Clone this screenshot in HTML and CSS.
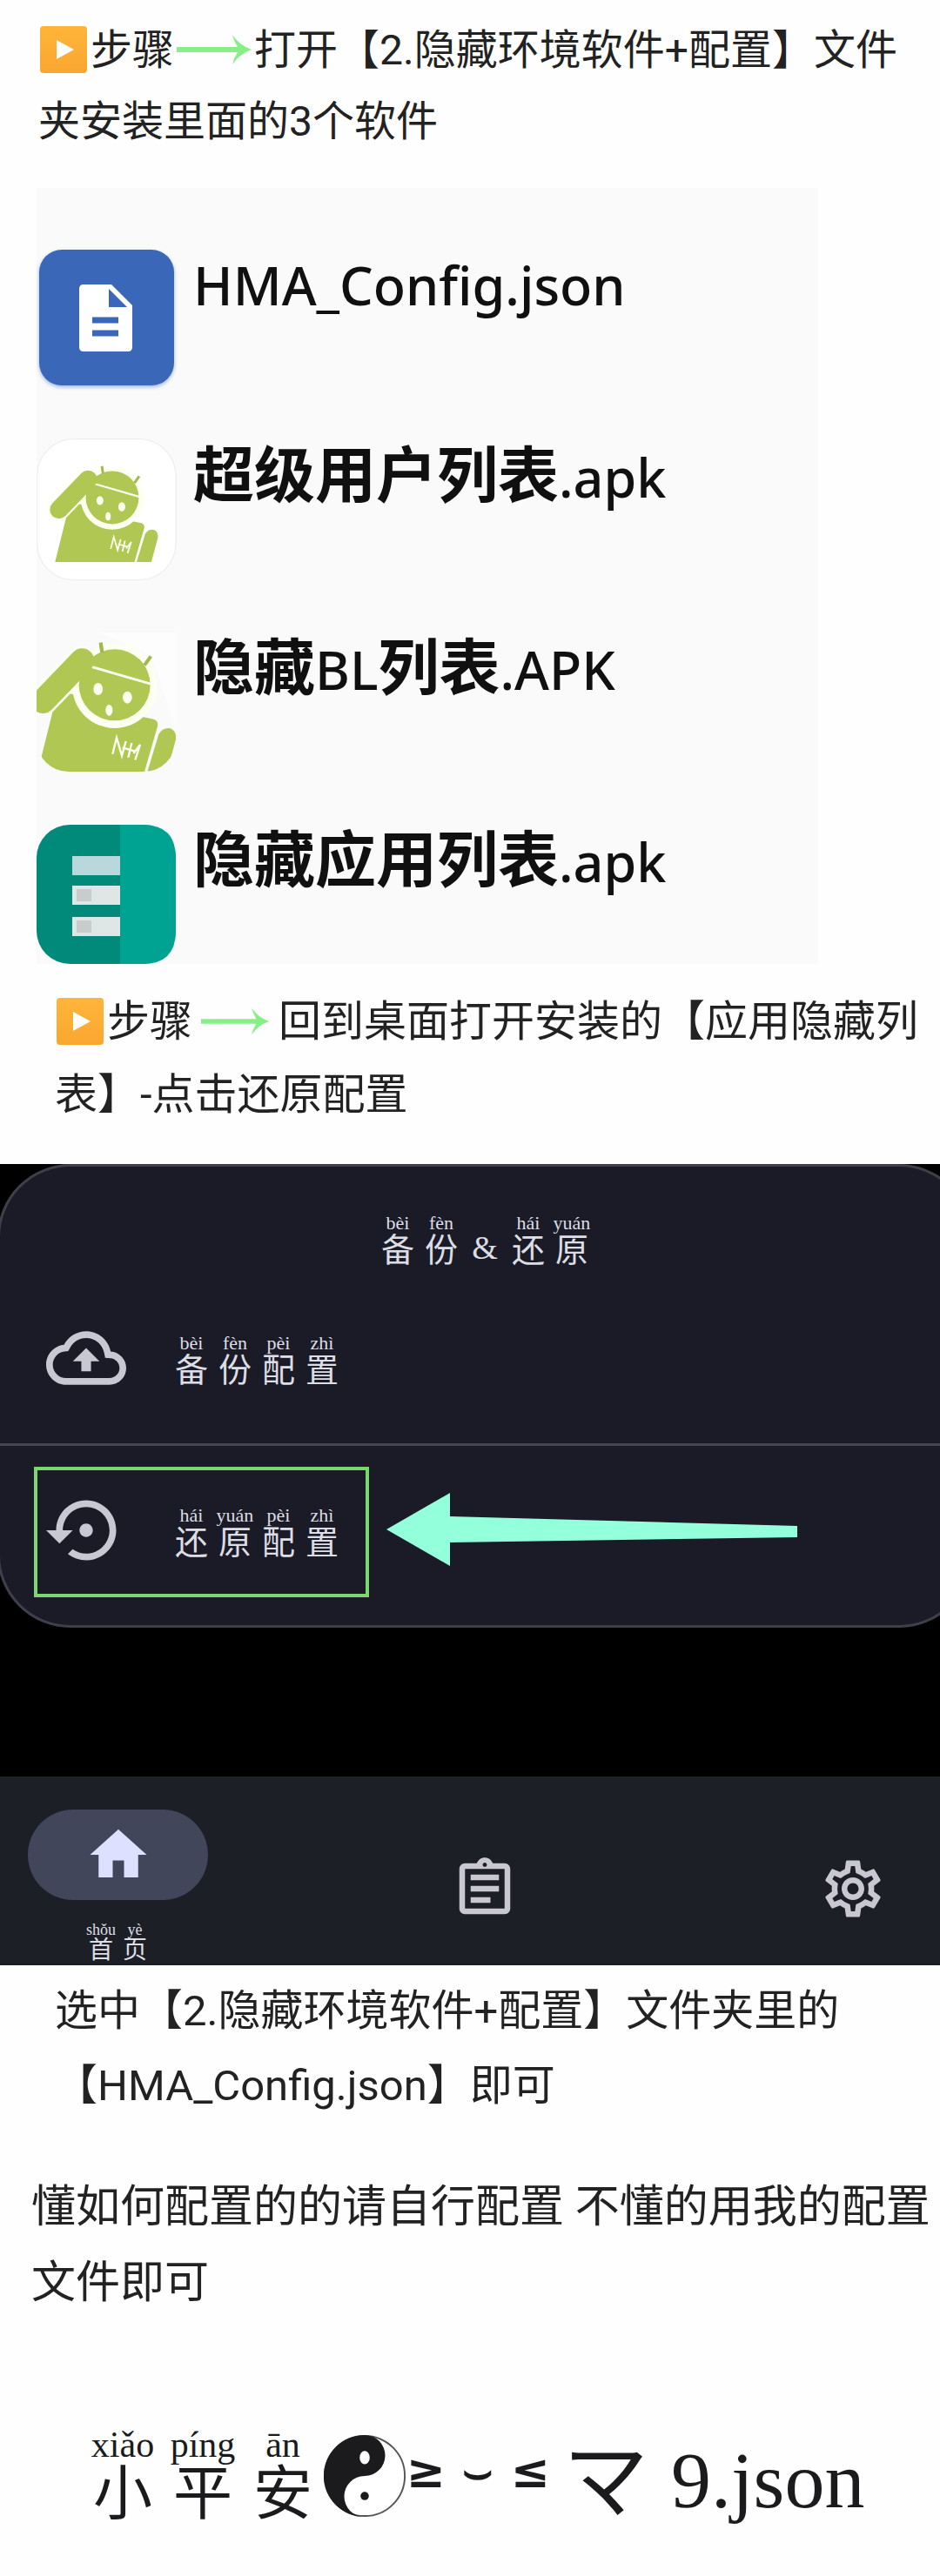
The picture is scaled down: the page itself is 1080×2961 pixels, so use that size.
FILE: index.html
```html
<!DOCTYPE html>
<html lang="zh-CN">
<head>
<meta charset="utf-8">
<meta name="viewport" content="width=device-width, initial-scale=1">
<title>隐藏应用列表 配置步骤</title>
<link rel="stylesheet" href="styles.css">
</head>
<body>
<svg width="0" height="0" class="defs" aria-hidden="true">
  <defs>
    <linearGradient id="orange" x1="0" y1="0" x2="0" y2="1">
      <stop offset="0" stop-color="#ffb53a"/><stop offset="1" stop-color="#f9a62f"/>
    </linearGradient>
    <symbol id="play" viewBox="0 0 54 54">
      <rect width="54" height="54" rx="4" fill="url(#orange)"/>
      <path d="M19 16 39 27 19 38Z" fill="#fff"/>
    </symbol>
    <symbol id="arrow" viewBox="0 0 86 36">
      <path d="M0 15H70Q66 9 64 1Q72 13 86 18Q72 23 64 35Q66 27 70 21H0Z" fill="#86f086"/>
    </symbol>
    <g id="robot">
      <path d="M150 921 405 1003 440 1010Q457 1016 453 1035L408 1191H40L95 970Q108 920 150 921Z" fill="#b0c853"/>
      <circle cx="305" cy="895" r="146" fill="#fdfff0"/>
      <path d="M193 808 58 948" stroke="#fdfff0" stroke-width="100" stroke-linecap="round"/>
      <circle cx="305" cy="892" r="123" fill="#b0c853"/>
      <path d="M257 746 262 780M430 793 408 824" stroke="#a2b950" stroke-width="12"/>
      <path d="M225 829 432 889" stroke="#fdfff0" stroke-width="9"/>
      <path d="M193 808 58 948" stroke="#b0c853" stroke-width="84" stroke-linecap="round"/>
      <g fill="#fdfff0">
        <ellipse cx="248" cy="906" rx="16" ry="21"/>
        <ellipse cx="349" cy="935" rx="16" ry="21"/>
        <ellipse cx="286" cy="979" rx="12" ry="19"/>
      </g>
      <path d="M457 1062Q472 1036 498 1042Q520 1053 516 1080L486 1191H418Z" fill="#b0c853"/>
      <path d="M298 1130 312 1074 330 1136 344 1086M332 1108 374 1120M352 1142 364 1092M376 1150 393 1098 370 1128" fill="none" stroke="#fdfff0" stroke-width="7"/>
    </g>
    <clipPath id="iconClip"><rect x="36" y="711" width="480" height="480" rx="110"/></clipPath>
    <clipPath id="flatClip"><rect x="0" y="700" width="560" height="491"/></clipPath>
  </defs>
</svg>

<main>
  <p class="step step-first"><svg class="play"><use href="#play"/></svg>步骤<svg class="arrow"><use href="#arrow"/></svg>打开【2.隐藏环境软件+配置】文件夹安装里面的3个软件</p>

  <ul class="files">
    <li>
      <svg class="file-icon doc" viewBox="0 0 160 160">
        <rect x="3" y="2" width="155" height="156" rx="26" fill="#3a67b8"/>
        <path d="M54 42H86L110 66V114Q110 119 105 119H54Q49 119 49 114V47Q49 42 54 42Z" fill="#fff"/>
        <path d="M83 47V68H104Z" fill="#3a67b8"/>
        <path d="M64 83H94M64 98H94" stroke="#3a67b8" stroke-width="7"/>
      </svg>
      <span>HMA_Config.json</span>
    </li>
    <li>
      <svg class="file-icon" viewBox="36 48 480 480">
        <rect x="38" y="44" width="478" height="486" rx="126" fill="#fff" stroke="#efefef" stroke-width="4"/>
        <g transform="translate(70 -418) scale(.744)" clip-path="url(#flatClip)"><use href="#robot"/></g>
      </svg>
      <span><b>超级用户列表</b>.apk</span>
    </li>
    <li>
      <svg class="file-icon" viewBox="36 711 480 480">
        <path d="M250 711 430 790 516 1040V711Z" fill="#fff" opacity=".5"/>
        <g clip-path="url(#iconClip)"><use href="#robot"/></g>
        <path d="M257 746 262 780" stroke="#a2b950" stroke-width="12"/>
      </svg>
      <span><b>隐藏</b>BL<b>列表</b>.APK</span>
    </li>
    <li>
      <svg class="file-icon" viewBox="0 0 160 160">
        <rect width="160" height="160" rx="38" fill="#01897a"/>
        <path d="M96 0H122Q160 0 160 38V122Q160 160 122 160H96Z" fill="#00a392"/>
        <path d="M41 36H96V58H41Z" fill="#b9d8dc"/>
        <path d="M41 70H96V92H41ZM41 106H96V128H41Z" fill="#dfe7e6"/>
        <path d="M46 74H63V88H46ZM46 110H63V124H46Z" fill="#c8cccb"/>
      </svg>
      <span><b>隐藏应用列表</b>.apk</span>
    </li>
  </ul>

  <p class="step step-second"><svg class="play"><use href="#play"/></svg>步骤<svg class="arrow arrow-small"><use href="#arrow"/></svg>回到桌面打开安装的【应用隐藏列表】-点击还原配置</p>

  <section class="phone">
    <div class="card">
      <h2 class="pinyin card-title"><ruby>备<rt>bèi</rt></ruby><ruby>份<rt>fèn</rt></ruby><span class="amp">&amp;</span><ruby>还<rt>hái</rt></ruby><ruby>原<rt>yuán</rt></ruby></h2>
      <button class="option backup" type="button">
        <svg viewBox="0 0 24 24"><path d="M19.35 10.04C18.67 6.59 15.64 4 12 4 9.11 4 6.6 5.64 5.35 8.04 2.34 8.36 0 10.91 0 14c0 3.31 2.69 6 6 6h13c2.76 0 5-2.24 5-5 0-2.64-2.05-4.78-4.65-4.96zM19 18H6c-2.21 0-4-1.79-4-4 0-2.05 1.53-3.76 3.56-3.97l1.07-.11.5-.95C8.08 7.14 9.94 6 12 6c2.62 0 4.88 1.86 5.39 4.43l.3 1.5 1.53.11c1.56.1 2.78 1.41 2.78 2.96 0 1.65-1.35 3-3 3zM8 13h2.550v3h2.900v-3H16l-4-4z"/></svg>
        <span class="pinyin"><ruby>备<rt>bèi</rt></ruby><ruby>份<rt>fèn</rt></ruby><ruby>配<rt>pèi</rt></ruby><ruby>置<rt>zhì</rt></ruby></span>
      </button>
      <div class="restore-row">
        <button class="option restore" type="button">
          <svg viewBox="0 0 24 24"><path d="M14 12c0-1.100-.9-2-2-2s-2 .9-2 2 .9 2 2 2 2-.9 2-2zm-2-9c-4.970 0-9 4.030-9 9H0l4 4 4-4H5c0-3.870 3.130-7 7-7s7 3.130 7 7-3.130 7-7 7c-1.510 0-2.910-.49-4.060-1.300l-1.420 1.440C8.040 20.300 9.940 21 12 21c4.970 0 9-4.030 9-9s-4.030-9-9-9z"/></svg>
          <span class="pinyin"><ruby>还<rt>hái</rt></ruby><ruby>原<rt>yuán</rt></ruby><ruby>配<rt>pèi</rt></ruby><ruby>置<rt>zhì</rt></ruby></span>
        </button>
        <svg class="pointer" viewBox="0 0 472 84"><path d="M0 42 73 0V27L472 38V51L73 57V84Z" fill="#93ffdb"/></svg>
      </div>
    </div>
    <nav class="tabs">
      <a class="tab" href="#home">
        <span class="pill"><svg viewBox="0 0 24 24"><path d="M10 20v-6h4v6h5v-8h3L12 3 2 12h3v8z"/></svg></span>
        <span class="pinyin tab-label"><ruby>首<rt>shǒu</rt></ruby><ruby>页<rt>yè</rt></ruby></span>
      </a>
      <a class="tab plain" href="#log" aria-label="日志"><svg viewBox="0 0 24 24"><path d="M7 15h7v2H7zm0-4h10v2H7zm0-4h10v2H7zm12-4h-4.180C14.400 1.840 13.300 1 12 1c-1.300 0-2.400.84-2.820 2H5c-1.100 0-2 .9-2 2v14c0 1.100.9 2 2 2h14c1.100 0 2-.9 2-2V5c0-1.100-.9-2-2-2zm-7-.25c.41 0 .75.34.75.75s-.34.75-.75.75-.75-.34-.75-.75.34-.75.75-.75zM19 19H5V5h14v14z"/></svg></a>
      <a class="tab plain" href="#settings" aria-label="设置"><svg viewBox="0 0 24 24"><path d="M19.430 12.980c.04-.32.07-.64.07-.98 0-.34-.03-.66-.07-.98l2.110-1.650c.19-.15.24-.42.12-.64l-2-3.460c-.09-.16-.26-.25-.44-.25-.06 0-.12.01-.17.03l-2.490 1c-.52-.4-1.080-.73-1.690-.98l-.38-2.650C14.460 2.180 14.250 2 14 2h-4c-.25 0-.46.18-.49.42l-.38 2.650c-.61.25-1.170.59-1.690.98l-2.490-1c-.06-.02-.12-.03-.18-.03-.17 0-.34.09-.43.25l-2 3.460c-.13.22-.07.49.12.64l2.110 1.650c-.04.32-.07.65-.07.98 0 .33.03.66.07.98l-2.110 1.650c-.19.15-.24.42-.12.64l2 3.460c.09.16.26.25.44.25.06 0 .12-.01.17-.03l2.490-1c.52.4 1.080.73 1.690.98l.38 2.650c.03.24.24.42.49.42h4c.25 0 .46-.18.49-.42l.38-2.650c.61-.25 1.170-.59 1.690-.98l2.490 1c.06.02.12.03.18.03.17 0 .34-.09.43-.25l2-3.460c.12-.22.07-.49-.12-.64l-2.110-1.650zm-1.980-1.710c.04.31.05.52.05.73 0 .21-.02.43-.05.73l-.14 1.130.89.7 1.080.84-.7 1.210-1.270-.51-1.040-.42-.9.68c-.43.32-.84.56-1.250.73l-1.060.43-.16 1.130-.2 1.350h-1.400l-.19-1.350-.16-1.130-1.060-.43c-.43-.18-.83-.41-1.230-.71l-.91-.7-1.060.43-1.270.51-.7-1.210 1.080-.84.89-.7-.14-1.130c-.03-.31-.05-.54-.05-.74s.02-.43.05-.73l.14-1.130-.89-.7-1.080-.84.7-1.210 1.270.51 1.040.42.9-.68c.43-.32.84-.56 1.250-.73l1.060-.43.16-1.130.2-1.350h1.390l.19 1.350.16 1.130 1.060.43c.43.18.83.41 1.230.71l.91.7 1.060-.43 1.270-.51.7 1.210-1.070.85-.89.7.14 1.130zM12 8c-2.210 0-4 1.790-4 4s1.790 4 4 4 4-1.790 4-4-1.790-4-4-4zm0 6c-1.100 0-2-.9-2-2s.9-2 2-2 2 .9 2 2-.9 2-2 2z"/></svg></a>
    </nav>
  </section>

  <p class="step step-third">选中【2.隐藏环境软件+配置】文件夹里的【HMA_Config.json】即可</p>
  <p class="step step-note">懂如何配置的的请自行配置 不懂的用我的配置文件即可</p>

  <footer class="signature">
    <span class="pinyin author"><ruby>小<rt>xiǎo</rt></ruby><ruby>平<rt>píng</rt></ruby><ruby>安<rt>ān</rt></ruby></span>
    <svg class="taiji" viewBox="0 0 100 100"><circle cx="50" cy="50" r="48" fill="#fff" stroke="#555" stroke-width="2"/><path d="M50 1A49 49 0 0 0 50 99A24.500 24.500 0 0 1 50 50A24.500 24.500 0 0 0 50 1Z" fill="#1b1b1e"/><ellipse cx="50" cy="28" rx="6" ry="8" fill="#fff"/><circle cx="50" cy="74" r="5" fill="#1b1b1e"/></svg>
    <span class="face"><span>≥</span><span>⌣</span><span>≤</span></span>
    <span class="kana">マ</span>
    <span class="ext">9.json</span>
  </footer>
</main>
</body>
</html>
```
FILE: styles.css
```css
* { box-sizing: border-box; }

body {
  margin: 0;
  background: #fefefe;
  color: #222;
  font-family: Roboto, "Noto Sans CJK SC", sans-serif;
}

.defs { position: absolute; }

.step { margin: 0; }

.step-first {
  padding: 17px 40px 0 44px;
  font-size: 48px;
  line-height: 82px;
}

.step-second {
  padding: 25px 12px 37px 63px;
  font-size: 49px;
  line-height: 84px;
}

.step-third {
  padding: 10px 80px 0 63px;
  font-size: 49px;
  line-height: 86px;
}

.step-note {
  padding: 52px 4px 0 36px;
  font-size: 51px;
  line-height: 87px;
}

.play {
  width: 54px;
  height: 54px;
  margin: 0 4px 0 2px;
  vertical-align: -10px;
}

.arrow {
  width: 86px;
  height: 36px;
  margin: 0 3px 0 3px;
  vertical-align: -1px;
}

.arrow-small {
  width: 78px;
  margin: 0 11px 0 10px;
}

/* File list */

.files {
  display: flex;
  flex-direction: column;
  gap: 61px;
  margin: 35px 140px 0 42px;
  padding: 69px 0 0;
  background: #fafafa;
  list-style: none;
}

.files li {
  display: flex;
  gap: 20px;
  height: 160px;
  color: #0f100f;
  font-family: "Noto Sans", "Noto Sans CJK SC", sans-serif;
  font-size: 61px;
  font-weight: 500;
  line-height: 86px;
  white-space: nowrap;
}

.files b {
  font-family: "Noto Sans CJK SC", sans-serif;
  font-size: 70px;
  font-weight: 700;
  line-height: 1px;
}

.file-icon {
  flex: none;
  width: 160px;
  height: 160px;
  overflow: visible;
}

.doc { filter: drop-shadow(0 2px 2px #9fb4dc); }

/* Text with pinyin above each character */

.pinyin {
  display: flex;
  font-family: "Noto Sans CJK SC", sans-serif;
  font-size: 38px;
  font-weight: 400;
  line-height: 34px;
}

.pinyin ruby {
  display: flex;
  flex-direction: column-reverse;
  align-items: center;
  width: 50px;
}

.pinyin rt {
  display: block;
  font-family: "Liberation Serif", serif;
  font-size: 22px;
  line-height: 22px;
}

/* App screen */

.phone {
  overflow-x: clip;
  background: #000;
  color: #dddde5;
}

.card {
  margin: 0 -37px 0 -3px;
  border: 3px solid #3e3f49;
  border-radius: 84px;
  background: #1a1b26;
}

.card-title {
  align-items: flex-end;
  justify-content: center;
  margin: 0;
  padding: 54px 0 18px;
}

.amp {
  width: 50px;
  font-family: "Liberation Serif", serif;
  text-align: center;
}

.option {
  display: flex;
  align-items: center;
  gap: 50px;
  border: 0;
  background: none;
  color: inherit;
}

.option svg {
  width: 92px;
  height: 92px;
  fill: #c8c7d2;
}

.backup {
  width: 100%;
  height: 193px;
  padding: 0 53px 6px;
  border-bottom: 3px solid #44454f;
}

.restore-row {
  display: flex;
  align-items: center;
  gap: 20px;
  padding: 24px 0 32px 39px;
}

.restore {
  width: 385px;
  height: 150px;
  padding: 0 10px 4px;
  border: 4px solid #7cd76e;
}

.pointer {
  width: 472px;
  height: 84px;
  margin-bottom: 6px;
}

.tabs {
  display: grid;
  grid-template-columns: 486fr 423fr 139fr;
  margin-top: 171px;
  padding: 38px 0 0 32px;
  background: #1d1f27;
}

.tab {
  color: #dddde5;
  text-decoration: none;
}

.tab svg {
  display: block;
  width: 78px;
  height: 78px;
  fill: #c8c7d2;
}

.plain { padding-top: 52px; }

.pill {
  display: flex;
  align-items: center;
  justify-content: center;
  width: 207px;
  height: 104px;
  border-radius: 52px;
  background: #41465a;
}

.tab .pill svg { fill: #dde1ff; }

.tab-label {
  justify-content: center;
  width: 207px;
  padding: 26px 0 6px;
  font-size: 28px;
  line-height: 27px;
}

.tab-label ruby { width: 39px; }

.tab-label rt {
  font-size: 18px;
  line-height: 16px;
}

/* Signature line */

.signature {
  display: flex;
  align-items: flex-end;
  padding: 123px 0 51px 95px;
  color: #1b1b1e;
  line-height: 80px;
}

.author {
  margin-bottom: 19px;
  font-size: 68px;
  line-height: 62px;
}

.author ruby { width: 92px; }

.author rt {
  font-size: 42px;
  line-height: 40px;
}

.taiji {
  width: 96px;
  height: 96px;
  margin-bottom: 17px;
}

.face {
  display: grid;
  grid-template-columns: repeat(3, 60px);
  margin: 0 8px 30px -8px;
  font-family: "DejaVu Sans", sans-serif;
  font-size: 54px;
  font-weight: 700;
  text-align: center;
}

.kana {
  margin-bottom: 28px;
  font-family: "Noto Sans CJK JP", sans-serif;
  font-size: 98px;
}

.ext {
  margin: 0 0 20px 26px;
  font-family: "Liberation Serif", serif;
  font-size: 92px;
}
```
